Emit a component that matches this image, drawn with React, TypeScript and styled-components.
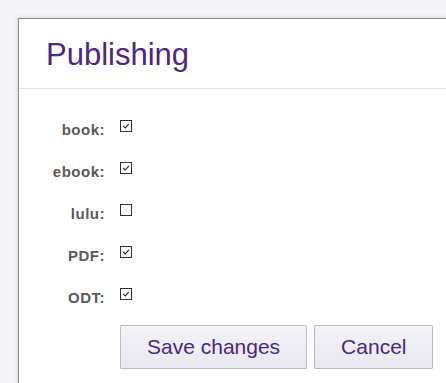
import styled, { createGlobalStyle } from 'styled-components';

const GlobalStyle = createGlobalStyle`
  html, body {
    margin: 0;
    background: #f4f3f7;
    overflow: hidden;
  }
  body {
    padding: 18px 0 0 18px;
    font-family: "Liberation Sans", Arial, sans-serif;
  }
`;

interface Option {
  label: string;
  checked: boolean;
}

const options: Option[] = [
  { label: 'book', checked: true },
  { label: 'ebook', checked: true },
  { label: 'lulu', checked: false },
  { label: 'PDF', checked: true },
  { label: 'ODT', checked: true }
];

const CheckBox = ({ checked }: { checked: boolean }) => (
  <Box>
    {checked && (
      <svg width="10" height="10" viewBox="0 0 10 10">
        <path d="M2.3 5 L4.3 6.9 L7.9 2.8" fill="none" stroke="#333333" strokeWidth="1.2" />
      </svg>
    )}
  </Box>
);

const App = () => {
  return (
    <>
      <GlobalStyle />
      <Panel>
        <Header>
          <Title>Publishing</Title>
        </Header>
        <Form>
          {options.map((opt) => (
            <Row key={opt.label}>
              <Label>{opt.label}:</Label>
              <CheckBox checked={opt.checked} />
            </Row>
          ))}
          <Actions>
            <Button>Save changes</Button>
            <Button>Cancel</Button>
          </Actions>
        </Form>
      </Panel>
    </>
  );
};

const Panel = styled.div`
  width: 520px;
  min-height: 420px;
  background: #ffffff;
  border-top: 1px solid #8e8e8e;
  border-left: 1px solid #8e8e8e;
  box-shadow: -1px -1px 4px rgba(0, 0, 0, 0.12);
`;

const Header = styled.div`
  height: 69px;
  border-bottom: 1px solid #e6e6e8;
  padding-left: 27px;
  display: flex;
  align-items: flex-start;
`;

const Title = styled.h1`
  margin: 18px 0 0;
  font-size: 31px;
  font-weight: normal;
  line-height: 36px;
  color: #4a2780;
`;

const Form = styled.div`
  padding-top: 20px;
  display: grid;
  grid-template-columns: 86px auto;
  column-gap: 15px;
  justify-content: start;
`;

const Row = styled.div`
  display: contents;
`;

const Label = styled.div`
  height: 42px;
  line-height: 42px;
  text-align: right;
  font-size: 15px;
  font-weight: bold;
  letter-spacing: 0.5px;
  color: #5a5a5a;
`;

const Box = styled.span`
  box-sizing: border-box;
  width: 12px;
  height: 12px;
  margin-top: 11px;
  border: 1px solid #333333;
  display: flex;
  align-items: center;
  justify-content: center;
`;

const Actions = styled.div`
  grid-column: 2;
  display: flex;
  gap: 7px;
  margin-top: 6px;
`;

const Button = styled.button`
  height: 44px;
  padding: 0 26px;
  border: 1px solid #bdbcc4;
  border-radius: 1px;
  background: linear-gradient(#f4f3f8, #e9e7ef);
  color: #4a2780;
  font-family: "Liberation Sans", Arial, sans-serif;
  font-size: 21px;
  cursor: pointer;
`;

export default App;
